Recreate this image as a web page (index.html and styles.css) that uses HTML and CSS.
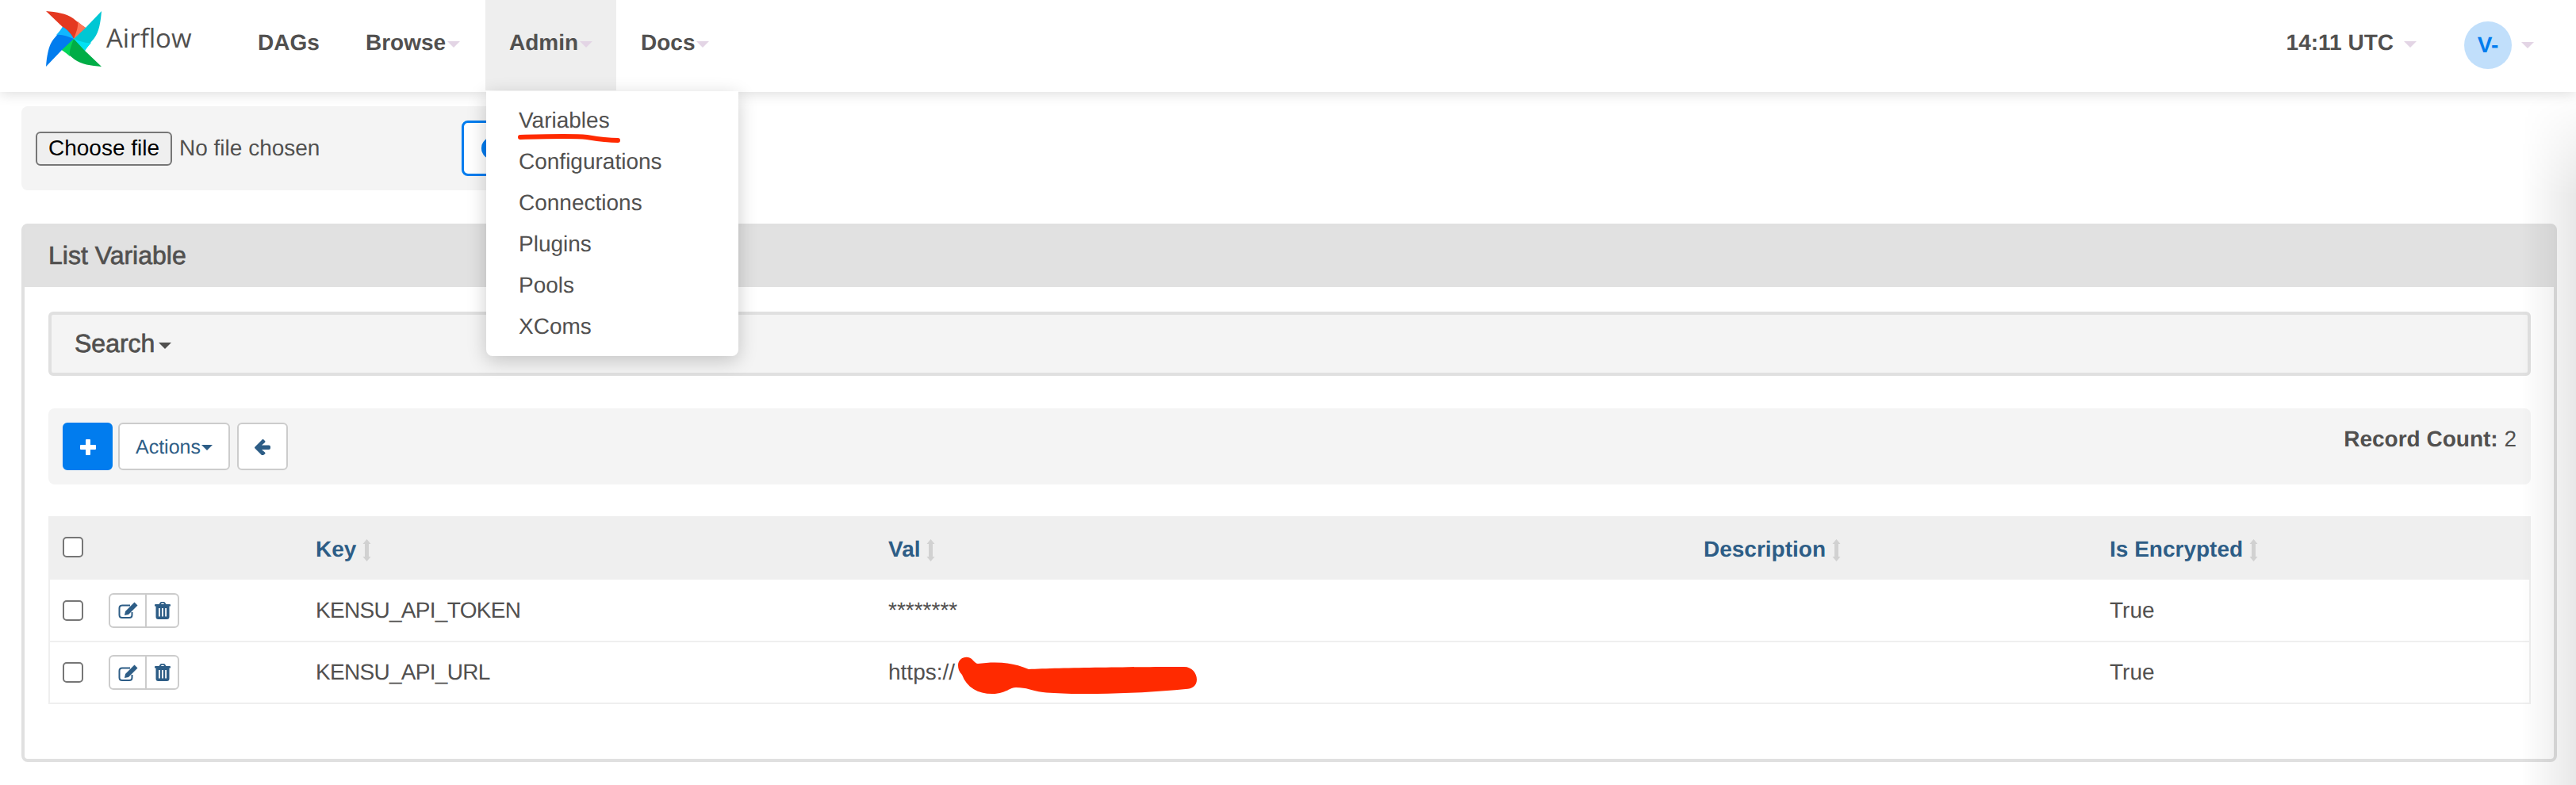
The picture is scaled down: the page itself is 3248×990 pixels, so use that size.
FILE: index.html
```html
<!DOCTYPE html>
<html>
  <head>
    <meta charset="UTF-8">
    <title>Airflow - List Variable</title>
    <link rel="stylesheet" href="styles.css">
  </head>
  <body>
    <svg class="defs">
      <defs>
        <g id="blade">
          <path class="blade-main" d="M0 0 L-13 -14 L-35 -35 C-22 -34 -9 -32 -1 -26 C5 -21 10 -17 15 -14 C12 -8 6 -3 0 0Z"/>
          <path class="blade-light" d="M0 0 C3 -8 6 -15 5 -22 C8 -19 12 -16 15 -14 C12 -8 6 -3 0 0Z"/>
        </g>
        <path id="icon-sort" d="M5.500 0 L10.500 6 L8 6 L8 22 L10.500 22 L5.500 28 L0.500 22 L3 22 L3 6 L0.500 6Z"/>
        <g id="icon-edit">
          <path d="M15 4.500 H5 Q1.500 4.500 1.500 8 V16.500 Q1.500 20 5 20 H14 Q17.500 20 17.500 16.500 V13" fill="none" stroke="currentColor" stroke-width="2"/>
          <path d="M20.500 0.500 L24.500 4.500 L13 16 L8 17 L9 12Z"/>
        </g>
        <path id="icon-trash" fill-rule="evenodd" d="M5.500 3 L7 0.800 Q7.500 0 8.500 0 H11.500 Q12.500 0 13 0.800 L14.500 3 H19 Q20 3 20 4 V5.500 H18.500 V19 Q18.500 22 15.500 22 H4.500 Q1.500 22 1.500 19 V5.500 H0 V4 Q0 3 1 3Z M8 3 H12 L11.300 1.800 H8.700Z M5 8 V18.500 H6.800 V8Z M9.100 8 V18.500 H10.900 V8Z M13.200 8 V18.500 H15 V8Z"/>
      </defs>
    </svg>

    <nav class="navbar">
      <a class="brand">
        <svg class="pinwheel" viewBox="-36 -36 72 72">
          <use href="#blade" class="blade-red"/>
          <use href="#blade" class="blade-teal" transform="rotate(90)"/>
          <use href="#blade" class="blade-green" transform="rotate(180)"/>
          <use href="#blade" class="blade-blue" transform="rotate(270)"/>
        </svg>
        <span class="brand-name">Airflow</span>
      </a>
      <ul class="nav-list">
        <li class="nav-item nav-dags"><a>DAGs</a></li>
        <li class="nav-item nav-browse"><a>Browse<span class="caret"></span></a></li>
        <li class="nav-item nav-admin">
          <a>Admin<span class="caret"></span></a>
          <ul class="dropdown">
            <li>Variables
              <svg class="underline-mark" viewBox="0 0 132 14">
                <path d="M4 5 C40 4 70 3 88 5 C100 7 115 9 127 9" fill="none" stroke="#ff2a00" stroke-width="6" stroke-linecap="round"/>
              </svg>
            </li>
            <li>Configurations</li>
            <li>Connections</li>
            <li>Plugins</li>
            <li>Pools</li>
            <li>XComs</li>
          </ul>
        </li>
        <li class="nav-item nav-docs"><a>Docs<span class="caret"></span></a></li>
      </ul>
      <div class="nav-right">
        <span class="clock">14:11 UTC<span class="caret caret-wide"></span></span>
        <span class="avatar">V-</span>
        <span class="caret avatar-caret"></span>
      </div>
    </nav>

    <main class="content">
      <form class="well upload-form">
        <button type="button" class="file-button">Choose file</button>
        <span class="file-name">No file chosen</span>
        <button type="button" class="import-button"><span class="import-icon"></span></button>
      </form>

      <section class="panel">
        <div class="panel-heading">List Variable</div>
        <div class="panel-body">
          <div class="search-well">Search<span class="caret caret-dark"></span></div>

          <div class="toolbar">
            <div class="toolbar-buttons">
              <a class="btn btn-primary">
                <svg class="icon-plus" viewBox="0 0 20 20"><path d="M7 1 Q7 0 8 0 H12 Q13 0 13 1 V7 H19 Q20 7 20 8 V12 Q20 13 19 13 H13 V19 Q13 20 12 20 H8 Q7 20 7 19 V13 H1 Q0 13 0 12 V8 Q0 7 1 7 H7Z"/></svg>
              </a>
              <a class="btn btn-actions">Actions<span class="caret caret-link"></span></a>
              <a class="btn btn-back">
                <svg class="icon-back" viewBox="0 0 20 20"><path d="M11 0 L13 2 Q14 3 13 4 L9 7.500 H18 Q20 7.500 20 9.500 V11 Q20 13 18 13 H9 L13 16.500 Q14 17.500 13 18.500 L11 20 Q10 21 9 20 L0.500 11.500 Q-0.500 10.500 0.500 9.500 L9 1 Q10 -0.500 11 0Z"/></svg>
              </a>
            </div>
            <div class="record-count"><strong>Record Count:</strong> 2</div>
          </div>

          <table class="list-table">
            <thead>
              <tr>
                <th class="col-check"><input type="checkbox" class="check"></th>
                <th class="col-actions"></th>
                <th class="col-key">Key<svg class="sort" viewBox="0 0 11 28"><use href="#icon-sort"/></svg></th>
                <th class="col-val">Val<svg class="sort" viewBox="0 0 11 28"><use href="#icon-sort"/></svg></th>
                <th class="col-desc">Description<svg class="sort" viewBox="0 0 11 28"><use href="#icon-sort"/></svg></th>
                <th class="col-enc">Is Encrypted<svg class="sort" viewBox="0 0 11 28"><use href="#icon-sort"/></svg></th>
              </tr>
            </thead>
            <tbody>
              <tr>
                <td><input type="checkbox" class="check"></td>
                <td>
                  <div class="row-actions">
                    <a class="row-edit"><svg class="icon-edit" viewBox="0 0 25 21"><use href="#icon-edit"/></svg></a>
                    <a class="row-trash"><svg class="icon-trash" viewBox="0 0 20 22"><use href="#icon-trash"/></svg></a>
                  </div>
                </td>
                <td class="key-cell">KENSU_API_TOKEN</td>
                <td>********</td>
                <td></td>
                <td>True</td>
              </tr>
              <tr>
                <td><input type="checkbox" class="check"></td>
                <td>
                  <div class="row-actions">
                    <a class="row-edit"><svg class="icon-edit" viewBox="0 0 25 21"><use href="#icon-edit"/></svg></a>
                    <a class="row-trash"><svg class="icon-trash" viewBox="0 0 20 22"><use href="#icon-trash"/></svg></a>
                  </div>
                </td>
                <td class="key-cell">KENSU_API_URL</td>
                <td class="val-redacted">https://
                  <svg class="scribble" viewBox="0 0 304 48">
                    <path d="M3 12 C3 2 16 -2 22 6 C24 8 26 10 28 10 C50 7 72 8 92 17 C130 15 230 14 288 14 C298 14 304 22 304 30 C304 38 298 42 290 42 C230 48 150 50 110 46 C95 44 90 40 76 40 C68 40 62 48 46 48 C28 48 14 40 8 24 C4 20 3 16 3 12Z" fill="#ff2a00"/>
                  </svg>
                </td>
                <td></td>
                <td>True</td>
              </tr>
            </tbody>
          </table>
        </div>
      </section>
    </main>
  </body>
</html>
```

FILE: styles.css
```css
* {
  box-sizing: border-box;
}
body {
  margin: 0;
  background-color: #fff;
  color: #51504f;
  font-family: "Liberation Sans", Arial, sans-serif;
  font-size: 28px;
  text-rendering: geometricPrecision;
}
ul {
  list-style: none;
  margin: 0;
  padding: 0;
}
.defs {
  display: none;
}

/* navbar */
.navbar {
  display: flex;
  align-items: flex-start;
  height: 116px;
  background-color: #fff;
  box-shadow: 0 2px 16px rgba(0, 0, 0, 0.14);
  position: relative;
  z-index: 5;
}
.brand {
  display: flex;
  align-items: flex-start;
  width: 325px;
  padding: 13px 0 0 57px;
}
.pinwheel {
  width: 72px;
  height: 72px;
  flex: none;
}
.blade-red { --blade: #e43921; --blade-light: #ff7557; }
.blade-teal { --blade: #00c7d4; --blade-light: #00e2f4; }
.blade-green { --blade: #00ad46; --blade-light: #04d659; }
.blade-blue { --blade: #017cee; --blade-light: #11b7ff; }
.blade-main { fill: var(--blade); }
.blade-light { fill: var(--blade-light); }
.brand-name {
  margin: 12px 0 0 5px;
  font-family: "Open Sans", sans-serif;
  font-size: 33px;
  line-height: 46px;
}
.nav-list {
  display: flex;
}
.nav-item {
  height: 114px;
  line-height: 108px;
  font-weight: bold;
  position: relative;
}
.nav-dags { width: 136px; }
.nav-browse { width: 151px; }
.nav-admin {
  width: 165px;
  padding-left: 30px;
  background-color: #eee;
}
.nav-docs {
  padding-left: 31px;
}
.caret {
  display: inline-block;
  width: 0;
  height: 0;
  margin-left: 2px;
  vertical-align: middle;
  border-top: 8px solid #e3d5e5;
  border-left: 8px solid transparent;
  border-right: 8px solid transparent;
}
.nav-right {
  display: flex;
  align-items: flex-start;
  margin-left: auto;
  padding: 27px 53px 0 0;
}
.clock {
  font-weight: bold;
  line-height: 54px;
}
.caret-wide {
  margin-left: 13px;
}
.avatar {
  width: 60px;
  height: 60px;
  margin-left: 60px;
  border-radius: 50%;
  background-color: #c1dffb;
  color: #017cee;
  font-weight: bold;
  text-align: center;
  line-height: 60px;
}
.avatar-caret {
  margin: 26px 0 0 12px;
}

/* admin menu */
.dropdown {
  position: absolute;
  top: 115px;
  left: 1px;
  width: 318px;
  padding: 11px 0;
  background-color: #fff;
  border-radius: 0 0 8px 8px;
  box-shadow: 0 6px 24px rgba(0, 0, 0, 0.2);
  font-weight: normal;
}
.dropdown li {
  height: 52px;
  padding-left: 41px;
  line-height: 52px;
  position: relative;
}
.underline-mark {
  position: absolute;
  left: 39px;
  top: 42px;
  width: 132px;
  height: 14px;
}

/* page */
.content {
  min-height: 874px;
  padding: 18px 24px 0 27px;
  position: relative;
}
/* window shadow along the right edge of the capture */
.content::after {
  content: "";
  position: absolute;
  top: 0;
  right: 0;
  bottom: 0;
  width: 68px;
  background: linear-gradient(to right, rgba(0, 0, 0, 0), rgba(0, 0, 0, 0.09));
  -webkit-mask-image: linear-gradient(to bottom, transparent, #000 130px);
  mask-image: linear-gradient(to bottom, transparent, #000 130px);
  pointer-events: none;
}
.well {
  background-color: #f4f4f4;
  border-radius: 8px;
}
.upload-form {
  display: flex;
  align-items: center;
  width: 800px;
  height: 106px;
  padding-left: 18px;
}
.file-button {
  width: 172px;
  height: 43px;
  padding: 0;
  background-color: #efefef;
  border: 2px solid #767676;
  border-radius: 6px;
  color: #000;
  font-family: inherit;
  font-size: 28px;
}
.file-name {
  width: 356px;
  margin-left: 9px;
  font-size: 28px;
}
.import-button {
  flex: 1;
  height: 70px;
  padding: 0 0 0 22px;
  margin-left: 0;
  background-color: #fff;
  border: 3px solid #017cee;
  border-radius: 8px;
  text-align: left;
}
.import-icon {
  display: block;
  width: 28px;
  height: 28px;
  border-radius: 50%;
  background-color: #017cee;
}
.panel {
  margin-top: 42px;
  height: 679px;
  border: 4px solid #e0e0e0;
  border-radius: 8px;
}
.panel-heading {
  height: 76px;
  padding-left: 30px;
  background-color: #e1e1e1;
  font-size: 32px;
  line-height: 72px;
  -webkit-text-stroke: 0.7px #51504f;
}
.panel-body {
  padding: 31px 29px 0 30px;
}
.search-well {
  height: 81px;
  padding-left: 29px;
  background-color: #f4f4f4;
  border: 4px solid #e0e0e0;
  border-radius: 6px;
  font-size: 32px;
  line-height: 73px;
  -webkit-text-stroke: 0.7px #51504f;
}
.caret-dark {
  border-top-color: #51504f;
  border-width: 8px 8px 0;
  margin-left: 5px;
}
.toolbar {
  display: flex;
  justify-content: space-between;
  height: 96px;
  margin-top: 41px;
  padding: 18px 18px 0;
  background-color: #f4f4f4;
  border-radius: 8px;
}
.toolbar-buttons {
  display: flex;
  gap: 7px;
}
.btn {
  display: flex;
  align-items: center;
  justify-content: center;
  height: 60px;
  background-color: #fff;
  border: 2px solid #ccc;
  border-radius: 6px;
  color: #2d5d86;
  font-size: 25px;
  padding-top: 2px;
}
.btn-primary {
  width: 63px;
  background-color: #017cee;
  border-color: #017cee;
}
.btn-actions {
  width: 141px;
}
.btn-back {
  width: 64px;
  margin-left: 2px;
}
.caret-link {
  border-top: 7px solid #2d5d86;
  border-left: 7px solid transparent;
  border-right: 7px solid transparent;
  margin-left: 1px;
}
.icon-plus {
  width: 20px;
  height: 20px;
  fill: #fff;
}
.icon-back {
  width: 20px;
  height: 20px;
  fill: #2d5d86;
}
.record-count {
  line-height: 42px;
}

/* table */
.list-table {
  width: 100%;
  margin-top: 40px;
  table-layout: fixed;
  border-collapse: collapse;
  border-left: 2px solid #efefef;
  border-right: 2px solid #efefef;
}
.list-table th {
  height: 80px;
  padding: 4px 18px 0;
  background-color: #efefef;
  color: #2d5d86;
  font-weight: bold;
  text-align: left;
  vertical-align: middle;
}
.list-table td {
  height: 78px;
  padding: 0 18px;
  border-bottom: 2px solid #efefef;
  vertical-align: middle;
}
.list-table .key-cell {
  letter-spacing: -0.7px;
}
.col-check { width: 75px; }
.col-actions { width: 243px; }
.col-key { width: 722px; }
.col-val { width: 1028px; }
.col-desc { width: 512px; }
.check {
  display: block;
  width: 26px;
  height: 26px;
  margin: 0;
  appearance: none;
  background-color: #fff;
  border: 2px solid #767676;
  border-radius: 5px;
}
.list-table th .check {
  background-color: #fff;
  margin-top: -6px;
}
.sort {
  width: 11px;
  height: 28px;
  margin-left: 8px;
  vertical-align: -6px;
  fill: #d1d1d1;
}
.list-table .col-check,
.list-table td:first-child {
  padding-left: 16px;
  padding-right: 0;
}
.list-table td:nth-child(2) {
  padding-left: 0;
}
.row-actions {
  display: flex;
  width: 89px;
  height: 44px;
  background-color: #fff;
  border: 2px solid #ccc;
  border-radius: 6px;
  color: #2d5d86;
}
.row-edit {
  display: flex;
  align-items: center;
  justify-content: center;
  width: 46px;
  border-right: 2px solid #ccc;
}
.row-trash {
  display: flex;
  align-items: center;
  justify-content: center;
  flex: 1;
}
.icon-edit {
  width: 25px;
  height: 21px;
  fill: currentColor;
}
.icon-trash {
  width: 20px;
  height: 22px;
  fill: currentColor;
}
.val-redacted {
  position: relative;
}
.scribble {
  position: absolute;
  left: 103px;
  top: 17px;
  width: 304px;
  height: 48px;
}
```
